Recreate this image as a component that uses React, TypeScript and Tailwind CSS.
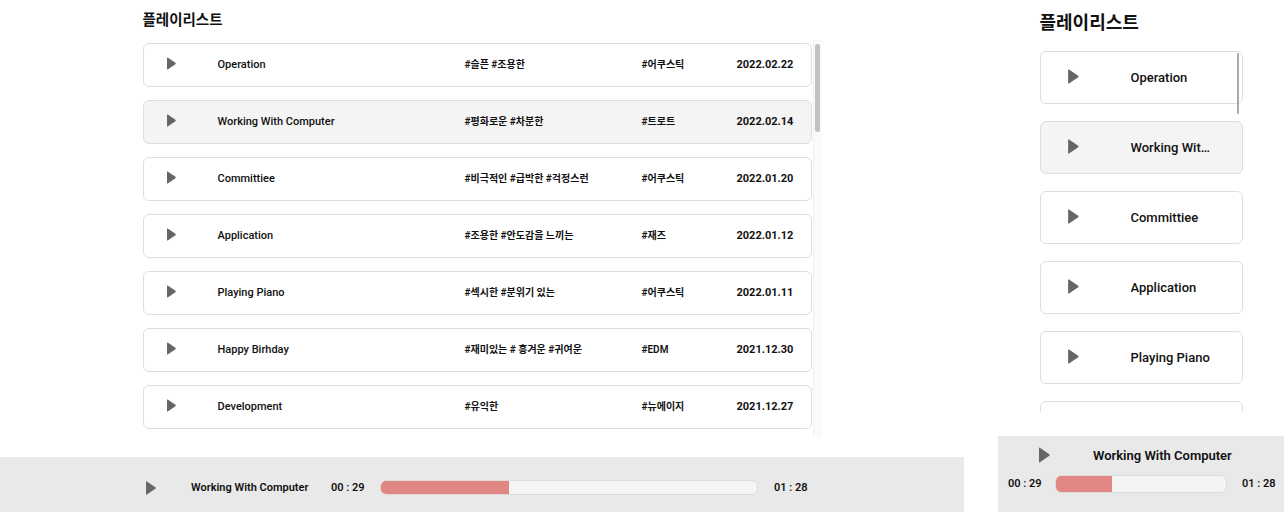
import React from 'react'

const songs = [
  { title: 'Operation', tags: '#슬픈 #조용한', genre: '#어쿠스틱', date: '2022.02.22' },
  { title: 'Working With Computer', tags: '#평화로운 #차분한', genre: '#트로트', date: '2022.02.14' },
  { title: 'Committiee', tags: '#비극적인 #급박한 #걱정스런', genre: '#어쿠스틱', date: '2022.01.20' },
  { title: 'Application', tags: '#조용한 #안도감을 느끼는', genre: '#재즈', date: '2022.01.12' },
  { title: 'Playing Piano', tags: '#섹시한 #분위기 있는', genre: '#어쿠스틱', date: '2022.01.11' },
  { title: 'Happy Birhday', tags: '#재미있는 # 흥겨운 #귀여운', genre: '#EDM', date: '2021.12.30' },
  { title: 'Development', tags: '#유익한', genre: '#뉴에이지', date: '2021.12.27' },
]

const selected = 1

function PlayIcon({ className }: { className?: string }) {
  return (
    <svg viewBox="0 0 10 14" className={className}>
      <path d="M0.8 0.4 L9.4 6.3 Q10 7 9.4 7.7 L0.8 13.6 Q0 14 0 13.1 L0 0.9 Q0 0 0.8 0.4 Z" fill="#666666" />
    </svg>
  )
}

function Progress({ className, pct }: { className: string; pct: number }) {
  return (
    <div className={`relative overflow-hidden rounded-[6px] border border-[#dcdcdc] bg-[#f4f4f4] ${className}`}>
      <div className="h-full bg-[#e08784]" style={{ width: `${pct}%` }} />
    </div>
  )
}

function DesktopView() {
  return (
    <div className="w-[964px] shrink-0 flex flex-col h-[512px]">
      <div className="flex-1 flex justify-center">
        <div className="w-[679px]">
          <h2 className="h-[40px] pt-[11px] text-[14.5px] font-bold leading-[20px] text-[#111]">플레이리스트</h2>
          <div className="flex h-[397px] overflow-hidden">
            <ul className="w-[670px] pt-[3px] flex flex-col gap-[13px]">
              {songs.map((s, i) => (
                <li
                  key={s.title}
                  className={`h-[44px] shrink-0 flex items-center rounded-[6px] border border-[#dedede] pl-[23px] text-[11px] font-medium text-[#111] ${i === selected ? 'bg-[#f4f4f4]' : 'bg-white'}`}
                >
                  <PlayIcon className="w-[9px] h-[13px] mb-[3px] shrink-0" />
                  <span className="ml-[42px] w-[247px] mt-px">{s.title}</span>
                  <span className="w-[177px] text-[10px] font-semibold mb-px">{s.tags}</span>
                  <span className="w-[95px] text-[10px] font-semibold mb-px">{s.genre}</span>
                  <span className="text-[11px] font-bold mt-px">{s.date}</span>
                </li>
              ))}
            </ul>
            <div className="w-[9px] ml-px bg-[#fafafa] border-l border-[#f0f0f0] pt-[4px] flex justify-center">
              <div className="w-[5px] h-[88px] rounded-full bg-[#c2c2c2]" />
            </div>
          </div>
        </div>
      </div>
      <div className="h-[55px] bg-[#e9e9e9] flex items-center pt-[6px] pl-[146px] text-[11px] font-semibold text-[#111]">
        <PlayIcon className="w-[10px] h-[14px] shrink-0" />
        <span className="ml-[35px] w-[140px] shrink-0 mt-[2px]">Working With Computer</span>
        <span className="w-[49px] shrink-0 mt-[2px]">00 : 29</span>
        <Progress className="w-[378px] h-[15px] shrink-0" pct={34} />
        <span className="ml-[16px] mt-[2px]">01 : 28</span>
      </div>
    </div>
  )
}

function MobileView() {
  return (
    <div className="w-[286px] shrink-0 flex flex-col h-[512px]">
      <div className="flex-1 flex flex-col items-center">
        <div className="w-[203px]">
          <h2 className="h-[51px] pt-[11px] text-[18px] font-bold leading-[24px] text-[#111]">플레이리스트</h2>
          <div className="relative h-[361px] overflow-hidden">
            <ul className="flex flex-col gap-[17px]">
              {songs.map((s, i) => (
                <li
                  key={s.title}
                  className={`h-[53px] shrink-0 flex items-center rounded-[6px] border border-[#dedede] pl-[27px] text-[13px] font-medium text-[#111] ${i === selected ? 'bg-[#f4f4f4]' : 'bg-white'}`}
                >
                  <PlayIcon className="w-[11px] h-[15px] mb-[3px] shrink-0" />
                  <span className="ml-[52px] w-[84px] truncate">{s.title}</span>
                </li>
              ))}
            </ul>
            <div className="absolute right-[4px] top-[2px] w-[2px] h-[61px] rounded-full bg-[#a9a9a9]" />
          </div>
        </div>
      </div>
      <div className="h-[76px] bg-[#e9e9e9] flex flex-col text-[#111] font-semibold">
        <div className="h-[38px] flex items-center pl-[41px] pt-[1px]">
          <PlayIcon className="w-[11px] h-[16px] mb-[2px] shrink-0" />
          <span className="ml-[43px] text-[13px]">Working With Computer</span>
        </div>
        <div className="flex items-center pl-[10px] pt-[1px] text-[11px]">
          <span className="w-[47px] shrink-0">00 : 29</span>
          <Progress className="w-[172px] h-[18px] shrink-0" pct={33} />
          <span className="ml-[15px]">01 : 28</span>
        </div>
      </div>
    </div>
  )
}

export default function App() {
  return (
    <div className="w-[1284px] h-[512px] overflow-hidden bg-white flex font-['Roboto','Noto_Sans_CJK_KR',sans-serif]">
      <DesktopView />
      <div className="w-[34px] shrink-0" />
      <MobileView />
    </div>
  )
}
